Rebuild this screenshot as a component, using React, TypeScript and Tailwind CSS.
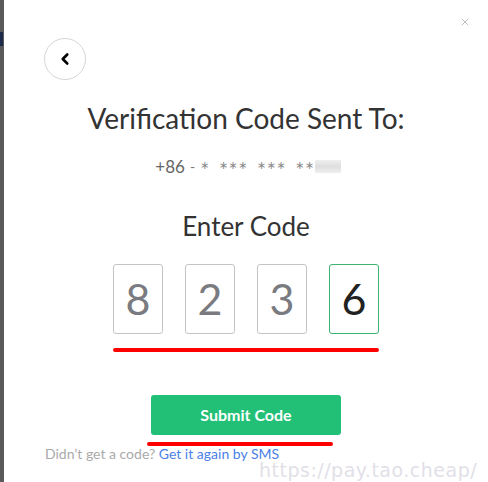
import { ChevronLeft, X } from "lucide-react";

const digits = ["8", "2", "3", "6"];
const masked = ["∗", "∗∗∗", "∗∗∗", "∗∗"];

export default function App() {
  return (
    <div className="flex h-[482px] w-[488px] overflow-hidden font-['Lato',sans-serif]">
      {/* dimmed page behind the modal */}
      <div className="flex w-[4px] flex-col bg-[#5a5a5a]">
        <div className="mt-[32px] h-[14px] w-[3px] bg-[#1e2a4a]" />
      </div>

      <div className="relative flex flex-1 flex-col bg-white">
        <button className="absolute right-[17px] top-[16px] text-[#bdbdbd]" aria-label="Close">
          <X size={12} strokeWidth={2} />
        </button>

        <div className="ml-[40px] mt-[38px] flex h-[42px] w-[42px] items-center justify-center rounded-full border border-[#d6d6d6]">
          <ChevronLeft size={18} strokeWidth={3.5} className="text-black" />
        </div>

        <div className="flex flex-col items-center">
          <h2 className="mt-[20px] text-[28px] leading-[36px] text-[#333]">
            Verification Code Sent To:
          </h2>

          <div className="ml-[4px] mt-[20px] flex items-center text-[#666]">
            <span className="text-[17px] leading-[20px]">+86</span>
            <span className="ml-[5px] text-[14px] text-[#777]">-</span>
            <div className="ml-[5px] flex gap-[9px] font-['DejaVu_Sans',sans-serif] text-[11px] tracking-[0.5px] text-[#8a8a8a]">
              {masked.map((m, i) => (
                <span key={i}>{m}</span>
              ))}
            </div>
            <span className="h-[13px] w-[26px] bg-gradient-to-b from-[#efefef] via-[#dedede] to-[#efefef]" />
          </div>

          <h3 className="mt-[32px] text-[26px] leading-[34px] text-[#333]">Enter Code</h3>

          <div className="mt-[21px] flex gap-[22px]">
            {digits.map((d, i) => (
              <div
                key={i}
                className={
                  i === 3
                    ? "flex h-[70px] w-[50px] items-center justify-center rounded-[3px] border border-[#3cb371] text-[43px] text-[#222]"
                    : "flex h-[70px] w-[50px] items-center justify-center rounded-[3px] border border-[#c4c4c4] text-[43px] text-[#7a7b80]"
                }
              >
                {d}
              </div>
            ))}
          </div>
          <div className="mt-[14px] h-[4px] w-[266px] rounded-full bg-[#ff0000]" />

          <button className="mt-[43px] h-[40px] w-[190px] rounded-[3px] bg-[#21c076] text-[16px] font-bold text-white">
            Submit Code
          </button>
          <div className="ml-[-12px] mt-[7px] h-[4px] w-[186px] rounded-full bg-[#ff0000]" />
        </div>

        <p className="ml-[41px] mt-[1px] text-[14px] leading-[14px] text-[#aaa]">
          Didn’t get a code? <span className="text-[#4a7fe6]">Get it again by SMS</span>
        </p>

        <div className="absolute left-[255px] top-[456px] text-[19px] tracking-[0.5px] text-[#e2dfe8] font-['DejaVu_Sans',sans-serif]">
          https://pay.tao.cheap/
        </div>
      </div>
    </div>
  );
}
